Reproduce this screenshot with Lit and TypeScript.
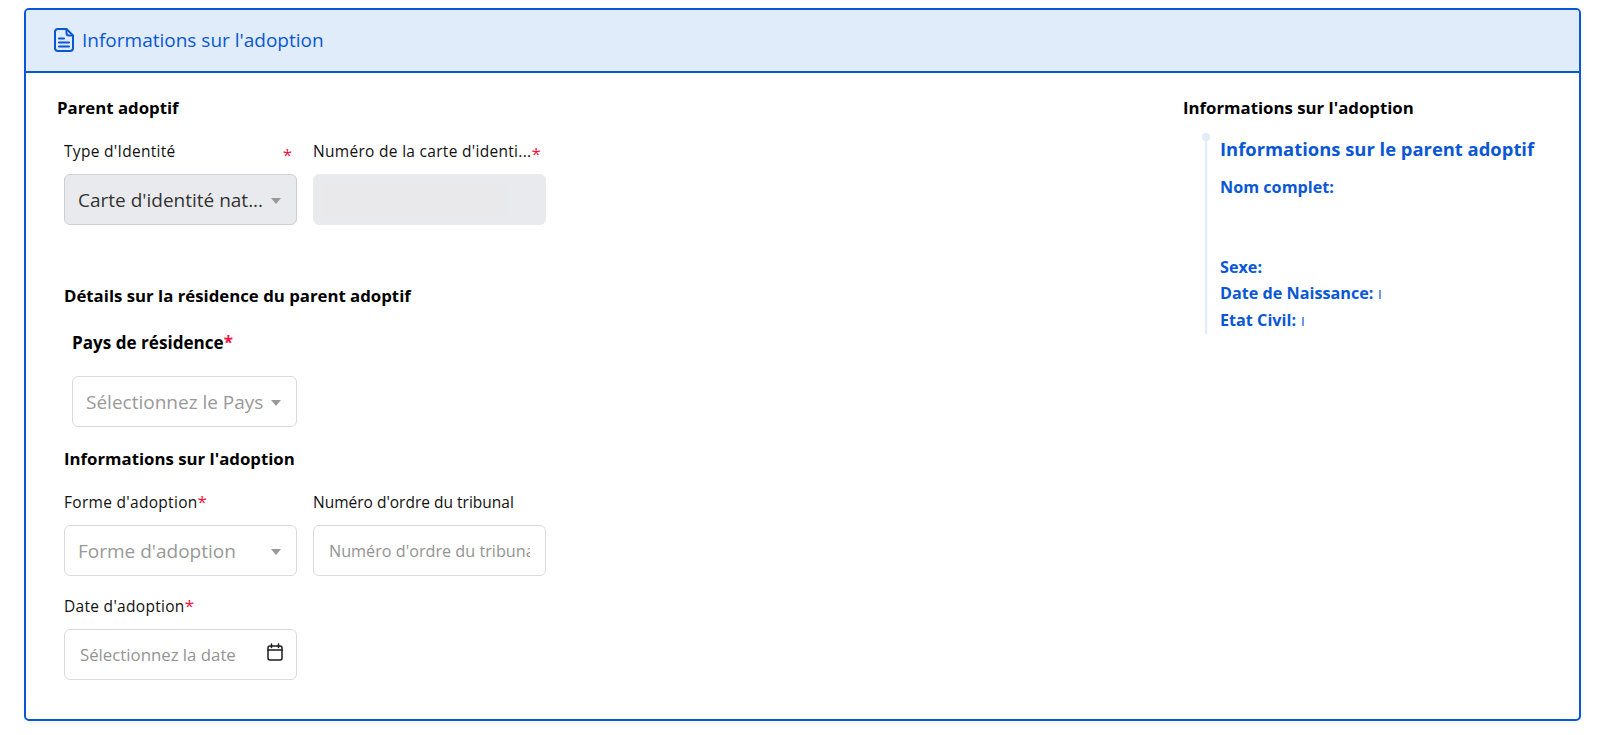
import { LitElement, html, css } from "lit";
import { customElement } from "lit/decorators.js";

@customElement("app-root")
export class AppRoot extends LitElement {
  static styles = css`
    :host { display: block; font-family: "Open Sans", "Noto Sans", sans-serif; color: #111; height: 735px; background: #fff; box-sizing: border-box; padding: 8px 19px 0 24px; }
    * { box-sizing: border-box; }
    .card { height: 713px; border: 2px solid #0a57d6; border-radius: 5px; box-shadow: 0 2px 6px rgba(0,0,0,.05); overflow: hidden; }
    .head { height: 63px; background: #e0ecf9; border-bottom: 2px solid #0a57d6; display: flex; align-items: center; padding-left: 28px; color: #0a57d6; font-size: 19px; gap: 8px; line-height: 24px; padding-bottom: 2px; }
    .head svg { display: block; }
    .body { display: flex; }
    .left { width: 1157px; padding: 25px 0 0 31px; }
    .h { font-size: 16.8px; font-weight: 700; line-height: 20px; color: #000; }
    .indent { padding-left: 7px; }
    .row { display: flex; gap: 16px; }
    .group { width: 233px; }
    .lab { display: flex; justify-content: space-between; line-height: 20px; height: 20px; font-size: 15.5px; letter-spacing: .3px; color: #111; margin-bottom: 13px; white-space: nowrap; }
    .lab.start { justify-content: flex-start; }
    .lab.tight { letter-spacing: 0; }
    .lab .t { overflow: hidden; text-overflow: ellipsis; }
    .star { color: #f5123d; font-size: 17px; letter-spacing: 0; }
    .lab .low { padding: 4px 5px 0 0; }
    .lab .lown { padding-top: 3px; }
    .field { height: 51px; border: 1px solid #d8dbe0; border-radius: 6px; background: #fff; display: flex; align-items: center; position: relative; padding-left: 13px; font-size: 19px; color: #999; }
    .field .v { overflow: hidden; white-space: nowrap; flex: 1; }
    .field .caret { width: 0; height: 0; border-left: 5.5px solid transparent; border-right: 5.5px solid transparent; border-top: 6px solid #999; margin: 2px 15px 0 7px; flex: none; }
    .field.dis { background: #e9eaed; border-color: #cdcfd2; color: #333; }
    .field.blank { background: #e9eaed; border-color: #e9eaed; padding: 0 40px 0 7px; }
    .field.blank i { display: block; width: 100%; height: 32px; background: #e9e9eb; }
    .field.small { font-size: 16.8px; padding-left: 15px; color: #949494; }
    .field.clip { font-size: 16.2px; padding-right: 15px; }
    .field.small svg { margin-right: 13px; flex: none; margin-top: -5px; }
    .s1 { margin-top: 23px; }
    .s2 { margin-top: 61px; }
    .pays { margin: 26px 0 0 15px; font-size: 17.1px; line-height: 22px; height: 22px; font-weight: 700; color: #000; }
    .w225 { width: 225px; margin: 22px 0 0 15px; }
    .s3 { margin-top: 22px; }
    .s4 { margin-top: 23px; }
    .s5 { margin-top: 20px; }
    .right { flex: 1; padding-top: 25px; }
    .tl { margin: 15px 0 0 22px; height: 201px; border-left: 2px solid #e0ecf9; padding-left: 13px; position: relative; color: #0a57d6; font-weight: 700; }
    .tl::before { content: ""; position: absolute; left: -5px; top: 0; width: 8px; height: 8px; border-radius: 50%; background: #e0ecf9; }
    .tl .title { font-size: 18.4px; line-height: 24px; padding-top: 4px; }
    .tl .it { font-size: 16.2px; line-height: 20px; height: 26.5px; }
    .tl .nom { margin: 16px 0 53px; }
    .mark { display: inline-block; width: 1.5px; height: 9px; background: #6b9ce6; margin-left: 6px; }
  `;

  private chevron() { return html`<span class="caret"></span>`; }

  render() {
    return html`
      <div class="card">
        <div class="head">
          <svg width="20" height="24" viewBox="0 0 20 24" fill="none" stroke="#0a57d6" stroke-width="2" stroke-linejoin="round" stroke-linecap="round">
            <path d="M4 1h8.5L19 7.5V20a3 3 0 0 1-3 3H4a3 3 0 0 1-3-3V4a3 3 0 0 1 3-3z"/>
            <path d="M12.5 1.5V5a2.5 2.5 0 0 0 2.5 2.5h3.5"/>
            <path d="M5 10.5h5M5 14.5h10M5 18.5h10"/>
          </svg>
          <span>Informations sur l'adoption</span>
        </div>
        <div class="body">
          <div class="left">
            <div class="h">Parent adoptif</div>
            <div class="row indent s1">
              <div class="group">
                <div class="lab"><span class="t">Type d'Identité</span><span class="star low">*</span></div>
                <div class="field dis"><span class="v">Carte d'identité nat...</span>${this.chevron()}</div>
              </div>
              <div class="group">
                <div class="lab start"><span class="t">Numéro de la carte d'identi...</span><span class="star lown">*</span></div>
                <div class="field blank"><i></i></div>
              </div>
            </div>
            <div class="h indent s2">Détails sur la résidence du parent adoptif</div>
            <div class="pays">Pays de résidence<span class="star">*</span></div>
            <div class="field w225"><span class="v">Sélectionnez le Pays</span>${this.chevron()}</div>
            <div class="h indent s3">Informations sur l'adoption</div>
            <div class="row indent s4">
              <div class="group">
                <div class="lab start"><span>Forme d'adoption</span><span class="star">*</span></div>
                <div class="field"><span class="v">Forme d'adoption</span>${this.chevron()}</div>
              </div>
              <div class="group">
                <div class="lab start tight"><span>Numéro d'ordre du tribunal</span></div>
                <div class="field small clip"><span class="v">Numéro d'ordre du tribunal</span></div>
              </div>
            </div>
            <div class="indent s5">
              <div class="group">
                <div class="lab start"><span>Date d'adoption</span><span class="star">*</span></div>
                <div class="field small"><span class="v">Sélectionnez la date</span>
                  <svg width="16" height="18" viewBox="0 0 16 18" fill="none" stroke="#1c1c1c" stroke-width="1.5" stroke-linecap="round" stroke-linejoin="round">
                    <rect x="1" y="3" width="14" height="14" rx="2"/>
                    <path d="M1 7h14M4.5 1v3.5M11.5 1v3.5"/>
                  </svg>
                </div>
              </div>
            </div>
          </div>
          <div class="right">
            <div class="h">Informations sur l'adoption</div>
            <div class="tl">
              <div class="title">Informations sur le parent adoptif</div>
              <div class="it nom">Nom complet:</div>
              <div class="it">Sexe:</div>
              <div class="it">Date de Naissance:<span class="mark"></span></div>
              <div class="it">Etat Civil:<span class="mark"></span></div>
            </div>
          </div>
        </div>
      </div>
    `;
  }
}
